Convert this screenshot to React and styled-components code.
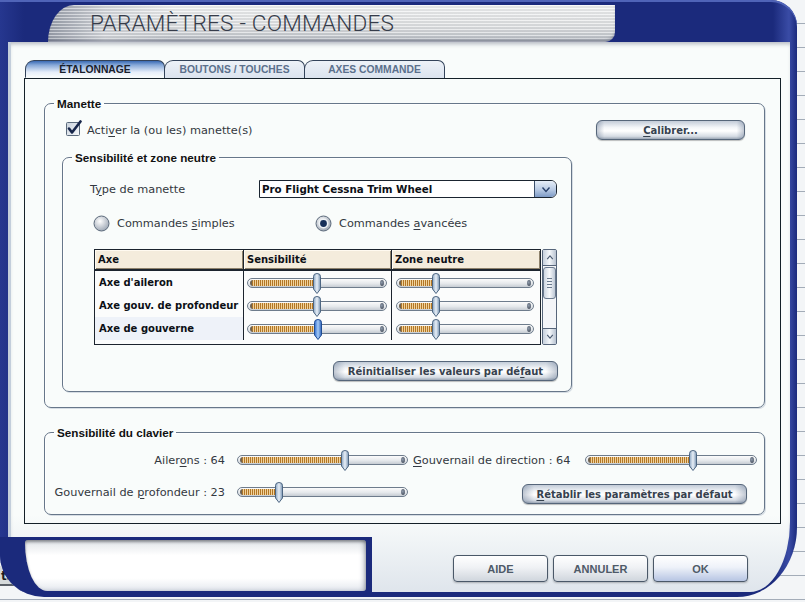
import styled, { createGlobalStyle } from "styled-components";

const NAVY = "#1b2a7c";
const UI_FONT = `"DejaVu Sans", Verdana, sans-serif`;
const BOLD_FONT = `"Liberation Sans", Arial, sans-serif`;

const axes = [
  { name: "Axe d'aileron", sens: 0.5, zone: 0.29 },
  { name: "Axe gouv. de profondeur", sens: 0.5, zone: 0.29 },
  { name: "Axe de gouverne", sens: 0.51, zone: 0.29, focus: true },
];

function CheckBox() {
  return (
    <svg width="17" height="17" viewBox="0 0 17 17">
      <defs>
        <linearGradient id="cbg" x1="0" y1="0" x2="1" y2="1">
          <stop offset="0" stopColor="#c9d2dc" />
          <stop offset="1" stopColor="#f6f8fa" />
        </linearGradient>
      </defs>
      <rect x="0.5" y="2.5" width="13" height="13" rx="1" fill="url(#cbg)" stroke="#5b6a7c" />
      <path d="M3 8.5 L6 12.5 L14.5 1.5" stroke="#17264a" strokeWidth="2.6" fill="none" strokeLinecap="round" strokeLinejoin="round" />
    </svg>
  );
}

function Radio({ on }) {
  return (
    <svg width="17" height="17" viewBox="0 0 17 17">
      <defs>
        <radialGradient id="rbg" cx="0.4" cy="0.35" r="0.7">
          <stop offset="0" stopColor="#ffffff" />
          <stop offset="1" stopColor="#9aa4b2" />
        </radialGradient>
      </defs>
      <circle cx="8.5" cy="8.5" r="7.5" fill="url(#rbg)" stroke="#5d6b7c" />
      {on && <circle cx="8.5" cy="8.5" r="5" fill="#eef2f6" />}
      {on && <circle cx="8.5" cy="8.5" r="3.4" fill="#17305a" />}
    </svg>
  );
}

function Chevron({ color = "#28406a", down = true }) {
  return (
    <svg width="10" height="7" viewBox="0 0 10 7">
      <path d={down ? "M1.5 1.5 L5 5.5 L8.5 1.5" : "M1.5 5.5 L5 1.5 L8.5 5.5"} stroke={color} strokeWidth="1.4" fill="none" />
    </svg>
  );
}

function ThumbShape({ focus }) {
  const id = focus ? "thf" : "thn";
  return (
    <svg width="10" height="21" viewBox="0 0 10 21">
      <defs>
        <linearGradient id={id} x1="0" y1="0" x2="1" y2="0">
          <stop offset="0" stopColor={focus ? "#2d6bd0" : "#8ba6c2"} />
          <stop offset="0.5" stopColor={focus ? "#a6cbf6" : "#e8eff7"} />
          <stop offset="1" stopColor={focus ? "#2a60b8" : "#7894b2"} />
        </linearGradient>
      </defs>
      <path d="M1.5 3.5 Q1.5 0.5 5 0.5 Q8.5 0.5 8.5 3.5 L8.5 16 L5 20.5 L1.5 16 Z" fill={`url(#${id})`} stroke={focus ? "#1f4c94" : "#4d6682"} />
    </svg>
  );
}

function Slider({ width, value, focus }) {
  const pos = Math.round(value * width);
  return (
    <SliderBox $w={width}>
      <Track>
        <Fill style={{ width: pos - 4 }} />
        <EndDot />
      </Track>
      <Thumb style={{ left: pos - 5 }}>
        <ThumbShape focus={focus} />
      </Thumb>
    </SliderBox>
  );
}

export default function App() {
  return (
    <>
      <GlobalStyle />
      <Page>
        <BehindWindow>ts</BehindWindow>
        <Window>
          <TitleBar>
            <TitleStrip>
              <Title>PARAMÈTRES - COMMANDES</Title>
            </TitleStrip>
          </TitleBar>

          <Main>
            <TabArea>
              <TabRow>
                <Tab $active>ÉTALONNAGE</Tab>
                <Tab>BOUTONS / TOUCHES</Tab>
                <Tab>AXES COMMANDE</Tab>
              </TabRow>

              <TabPanel>
                <Group>
                  <Legend>Manette</Legend>
                  <ManetteBody>
                    <TopRow>
                      <CheckLabel>
                        <CheckBox />
                        <span>
                          Acti<u>v</u>er la (ou les) manette(s)
                        </span>
                      </CheckLabel>
                      <Button $w={149}>
                        <u>C</u>alibrer...
                      </Button>
                    </TopRow>

                    <SubGroup>
                      <Legend>Sensibilité et zone neutre</Legend>
                      <SensBody>
                        <TypeRow>
                          <Label $w={169}>
                            T<u>y</u>pe de manette
                          </Label>
                          <Select>
                            <SelectText>Pro Flight Cessna Trim Wheel</SelectText>
                            <SelectArrow>
                              <Chevron />
                            </SelectArrow>
                          </Select>
                        </TypeRow>

                        <RadioRow>
                          <RadioOption $w={222}>
                            <Radio />
                            <span>
                              Commandes <u>s</u>imples
                            </span>
                          </RadioOption>
                          <RadioOption>
                            <Radio on />
                            <span>
                              Commandes <u>a</u>vancées
                            </span>
                          </RadioOption>
                        </RadioRow>

                        <TableWrap>
                          <AxisGrid>
                            <HeadCell>Axe</HeadCell>
                            <HeadCell>Sensibilité</HeadCell>
                            <HeadCell $last>Zone neutre</HeadCell>
                            {axes.map((a) => (
                              <Row key={a.name}>
                                <NameCell $focus={a.focus}>{a.name}</NameCell>
                                <SliderCell $pl={3}>
                                  <Slider width={140} value={a.sens} focus={a.focus} />
                                </SliderCell>
                                <SliderCell $pl={4} $last>
                                  <Slider width={138} value={a.zone} />
                                </SliderCell>
                              </Row>
                            ))}
                          </AxisGrid>
                          <ScrollBar>
                            <ScrollButton>
                              <Chevron down={false} color="#4a5a70" />
                            </ScrollButton>
                            <ScrollThumb>
                              <Grip />
                              <Grip />
                              <Grip />
                              <Grip />
                            </ScrollThumb>
                            <ScrollSpace />
                            <ScrollButton $bottom>
                              <Chevron color="#4a5a70" />
                            </ScrollButton>
                          </ScrollBar>
                        </TableWrap>

                        <ButtonLine>
                          <Button $w={225}>
                            Réinitialiser les valeurs par dé<u>f</u>aut
                          </Button>
                        </ButtonLine>
                      </SensBody>
                    </SubGroup>
                  </ManetteBody>
                </Group>

                <Group $mt={18}>
                  <Legend>Sensibilité du clavier</Legend>
                  <KeyBody>
                    <KeyRow>
                      <Label $w={171} $right>
                        Ailer<u>o</u>ns : 64
                      </Label>
                      <SliderSlot $ml={12}>
                        <Slider width={171} value={0.63} />
                      </SliderSlot>
                      <Label $ml={5}>
                        <u>G</u>ouvernail de direction : 64
                      </Label>
                      <SliderSlot $ml="auto">
                        <Slider width={172} value={0.63} />
                      </SliderSlot>
                    </KeyRow>
                    <KeyRow $second>
                      <Label $w={171} $right>
                        Gouvernail de <u>p</u>rofondeur : 23
                      </Label>
                      <SliderSlot $ml={12}>
                        <Slider width={171} value={0.245} />
                      </SliderSlot>
                      <Button $w={225} $end>
                        <u>R</u>établir les paramètres par défaut
                      </Button>
                    </KeyRow>
                  </KeyBody>
                </Group>
              </TabPanel>
            </TabArea>

            <Footer>
              <Dock>
                <DockPanel />
              </Dock>
              <FooterButtons>
                <FooterButton>AIDE</FooterButton>
                <FooterButton>ANNULER</FooterButton>
                <FooterButton $primary>OK</FooterButton>
              </FooterButtons>
            </Footer>
          </Main>
        </Window>
      </Page>
    </>
  );
}

const GlobalStyle = createGlobalStyle`
  html, body {
    margin: 0;
    padding: 0;
  }
  body {
    width: 805px;
    height: 602px;
    overflow: hidden;
    background: repeating-linear-gradient(180deg, #f3f5f7 0 23px, #a3acb8 23px 24px);
    font-family: ${UI_FONT};
  }
  u {
    text-decoration: underline;
    text-underline-offset: 2px;
  }
`;

const Page = styled.div`
  position: relative;
  width: 805px;
  height: 602px;
`;

const BehindWindow = styled.div`
  position: absolute;
  left: 0;
  top: 566px;
  width: 110px;
  height: 20px;
  padding-left: 1px;
  box-sizing: border-box;
  background: #d6dadb;
  border-bottom: 2px solid #5a6068;
  font: bold 12px ${UI_FONT};
  line-height: 20px;
  color: #1a1d22;
`;

const Window = styled.div`
  position: relative;
  z-index: 1;
  width: 797px;
  height: 597px;
  display: flex;
  flex-direction: column;
  overflow: hidden;
  background: linear-gradient(90deg, #26378f 0, ${NAVY} 3%, ${NAVY} 97%, #3a4ca6 99%, ${NAVY} 100%);
  border-radius: 0 26px 60px 44px / 0 26px 70px 42px;
  box-shadow: inset 0 2px 0 #5064b8;
`;

const TitleBar = styled.div`
  flex: none;
  height: 42px;
  display: flex;
  align-items: flex-end;
`;

const TitleStrip = styled.div`
  margin-left: 48px;
  width: 567px;
  height: 37px;
  box-sizing: border-box;
  padding-left: 42px;
  display: flex;
  align-items: center;
  border-radius: 26px 0 10px 0 / 37px 0 10px 0;
  background:
    repeating-linear-gradient(180deg, rgba(255, 255, 255, 0.45) 0 1px, rgba(0, 0, 0, 0.06) 1px 3px),
    linear-gradient(90deg, #9aa0ac 0, #d4d7dc 10%, rgba(255, 255, 255, 0) 22%),
    linear-gradient(180deg, #f2f3f4 0%, #dfe1e3 60%, #b9bec6 100%);
  box-shadow: inset 0 -3px 3px -1px rgba(20, 30, 60, 0.35);
`;

const Title = styled.h1`
  margin: 0;
  font: 300 22.6px Roboto, "Liberation Sans", sans-serif;
  letter-spacing: 0.2px;
  color: #363c4a;
`;

const Main = styled.div`
  flex: 1;
  display: flex;
  flex-direction: column;
  margin: 0 7px 5px 8px;
  border-left: 3px solid #c3cedb;
  border-bottom-right-radius: 40px 70px;
  background: linear-gradient(180deg, #f9fcfb 0, #f9fcfb 86%, #dfe5ec 100%);
  box-shadow: inset 0 4px 4px -2px rgba(20, 30, 60, 0.3);
`;

const TabArea = styled.div`
  padding: 18px 9px 0 13px;
  display: flex;
  flex-direction: column;
`;

const TabRow = styled.div`
  display: flex;
  height: 18px;
  margin-left: 1px;
  position: relative;
  z-index: 1;
`;

const Tab = styled.div`
  width: 140px;
  box-sizing: border-box;
  display: flex;
  align-items: center;
  justify-content: center;
  border: 1px solid #33435a;
  border-bottom: ${(p) => (p.$active ? "1px solid #f6fafb" : "none")};
  border-radius: 9px 7px 0 0;
  font: bold 10.3px ${BOLD_FONT};
  color: ${(p) => (p.$active ? "#18202c" : "#5b708c")};
  background: ${(p) =>
    p.$active
      ? "linear-gradient(180deg, #3a6ab4 0, #86a8d8 25%, #e6eef9 70%, #f8fbfb 100%)"
      : "linear-gradient(180deg, #edf2f8 0, #dbe3ee 100%)"};
  & + & {
    margin-left: -1px;
    width: 141px;
  }
`;

const TabPanel = styled.div`
  height: 446px;
  box-sizing: border-box;
  border: 1px solid #142028;
  padding: 18px 15px 6px 19px;
  display: flex;
  flex-direction: column;
`;

const Group = styled.fieldset`
  margin: ${(p) => p.$mt || 0}px 0 0 0;
  padding: 0;
  min-width: 0;
  border: 1px solid #67778a;
  border-radius: 7px;
  box-shadow: 1px 1px 0 #d6dde4, inset 1px 1px 0 #ffffff;
`;

const SubGroup = styled(Group)`
  width: 510px;
  box-sizing: border-box;
  margin: 11px 0 0 17px;
`;

const Legend = styled.legend`
  margin-left: 9px;
  padding: 0 3px;
  font: bold 11.7px ${BOLD_FONT};
  line-height: 13px;
  color: #111;
`;

const ManetteBody = styled.div`
  padding: 10px 19px 15px 0;
`;

const TopRow = styled.div`
  display: flex;
  align-items: center;
  justify-content: space-between;
  height: 20px;
  margin-left: 21px;
`;

const CheckLabel = styled.label`
  display: flex;
  align-items: center;
  gap: 4px;
  font: 11.3px ${UI_FONT};
  color: #333840;
  svg {
    margin-top: -3px;
  }
`;

const Button = styled.button`
  flex: none;
  width: ${(p) => p.$w}px;
  height: 20px;
  box-sizing: border-box;
  padding: 0;
  align-self: ${(p) => (p.$end ? "flex-end" : "auto")};
  margin-left: ${(p) => (p.$end ? "auto" : "0")};
  margin-right: ${(p) => (p.$end ? "10px" : "0")};
  border: 1px solid #56667a;
  border-radius: 6px;
  background:
    linear-gradient(90deg, rgba(80, 100, 130, 0.35) 0, rgba(80, 100, 130, 0) 5%, rgba(80, 100, 130, 0) 95%, rgba(80, 100, 130, 0.35) 100%),
    linear-gradient(180deg, #c3ccd8 0%, #f2f5f8 35%, #ffffff 55%, #d6dce4 85%, #9ba6b5 100%);
  box-shadow: 0 1px 1px rgba(0, 0, 0, 0.25);
  font: bold 10px ${UI_FONT};
  color: #36414e;
  cursor: pointer;
`;

const SensBody = styled.div`
  padding: 16px 14px 10px 27px;
  display: flex;
  flex-direction: column;
`;

const TypeRow = styled.div`
  display: flex;
  align-items: center;
  height: 18px;
`;

const Label = styled.span`
  flex: none;
  width: ${(p) => (p.$w ? `${p.$w}px` : "auto")};
  margin-left: ${(p) => p.$ml || 0}px;
  text-align: ${(p) => (p.$right ? "right" : "left")};
  font: 11.3px ${UI_FONT};
  color: #333840;
  white-space: nowrap;
`;

const Select = styled.div`
  width: 298px;
  height: 18px;
  box-sizing: border-box;
  display: flex;
  border: 1px solid #1a2430;
  border-radius: 0 6px 6px 0;
  background: #ffffff;
  overflow: hidden;
`;

const SelectText = styled.span`
  flex: 1;
  padding-left: 2px;
  font: bold 10.3px ${UI_FONT};
  line-height: 16px;
  color: #0c1016;
`;

const SelectArrow = styled.span`
  width: 21px;
  display: flex;
  align-items: center;
  justify-content: center;
  border-left: 1px solid #3a4e6a;
  background: linear-gradient(180deg, #e6eef8 0, #b7c9e3 55%, #7d9ac6 100%);
`;

const RadioRow = styled.div`
  display: flex;
  align-items: center;
  height: 18px;
  margin: 16px 0 0 3px;
`;

const RadioOption = styled.label`
  flex: none;
  width: ${(p) => (p.$w ? `${p.$w}px` : "auto")};
  display: flex;
  align-items: center;
  gap: 7px;
  font: 11.3px ${UI_FONT};
  color: #333840;
`;

const TableWrap = styled.div`
  display: flex;
  gap: 1px;
  width: 463px;
  height: 96px;
  margin: 17px 0 0 4px;
`;

const AxisGrid = styled.div`
  flex: 1;
  display: grid;
  grid-template-columns: 149px 148px 1fr;
  grid-template-rows: 21px repeat(3, 23px);
  align-content: start;
  border: 1px solid #1c242e;
  background: #fbfcfc;
`;

const HeadCell = styled.div`
  display: flex;
  align-items: center;
  padding-left: 3px;
  border-right: ${(p) => (p.$last ? "none" : "1px solid #1c242e")};
  border-bottom: 2px solid #1c242e;
  background: #f4ecdc;
  box-shadow: inset 1px 1px 0 #fffaf0, inset -1px -1px 0 #8e826c;
  font: bold 10px ${UI_FONT};
  color: #0c1016;
`;

const Row = styled.div`
  display: contents;
`;

const NameCell = styled.div`
  display: flex;
  align-items: center;
  padding-left: 4px;
  border-right: 1px solid #1c242e;
  background: ${(p) => (p.$focus ? "#eef2f9" : "transparent")};
  font: bold 10px ${UI_FONT};
  color: #0c1016;
  white-space: nowrap;
  overflow: hidden;
`;

const SliderCell = styled.div`
  display: flex;
  align-items: center;
  padding-left: ${(p) => p.$pl}px;
  border-right: ${(p) => (p.$last ? "none" : "1px solid #1c242e")};
`;

const SliderBox = styled.div`
  position: relative;
  flex: none;
  width: ${(p) => p.$w}px;
  height: 22px;
  display: flex;
  align-items: center;
`;

const SliderSlot = styled.div`
  display: flex;
  margin-left: ${(p) => (p.$ml === "auto" ? "auto" : `${p.$ml}px`)};
`;

const Track = styled.div`
  position: relative;
  flex: 1;
  height: 10px;
  box-sizing: border-box;
  padding-left: 2px;
  display: flex;
  align-items: center;
  border: 1px solid #6e7c8c;
  border-radius: 5px;
  background: linear-gradient(180deg, #fbfbfb 0, #e6e9ec 55%, #c6ccd3 100%);
`;

const Fill = styled.div`
  flex: none;
  height: 6px;
  box-sizing: border-box;
  border-left: 2px solid #6f6250;
  border-radius: 3px 0 0 3px;
  background: repeating-linear-gradient(90deg, #b27626 0 1px, #f1d29a 1px 2px);
`;

const EndDot = styled.span`
  position: absolute;
  right: 2px;
  top: 1px;
  width: 4px;
  height: 6px;
  border-radius: 50%;
  background: radial-gradient(circle at 40% 40%, #8c98a8, #3e4654);
`;

const Thumb = styled.span`
  position: absolute;
  top: 1px;
  width: 10px;
  height: 21px;
  display: flex;
`;

const ScrollBar = styled.div`
  width: 13px;
  display: flex;
  flex-direction: column;
  border: 1px solid #56657a;
  border-radius: 2px;
  background: #f3f5f8;
`;

const ScrollButton = styled.div`
  height: 15px;
  display: flex;
  align-items: center;
  justify-content: center;
  background: linear-gradient(90deg, #c6d0dc, #f4f7fa 50%, #b8c3d1);
  border-bottom: ${(p) => (p.$bottom ? "none" : "1px solid #56657a")};
  border-top: ${(p) => (p.$bottom ? "1px solid #56657a" : "none")};
  svg {
    width: 8px;
  }
`;

const ScrollThumb = styled.div`
  height: 30px;
  margin: 1px 0;
  display: flex;
  flex-direction: column;
  align-items: center;
  justify-content: center;
  gap: 2px;
  border: 1px solid #6a7a8e;
  border-radius: 3px;
  background: linear-gradient(90deg, #cdd6e1, #f7f9fb 50%, #bcc7d5);
`;

const Grip = styled.span`
  width: 5px;
  height: 1px;
  background: #6a7a8e;
`;

const ScrollSpace = styled.div`
  flex: 1;
`;

const ButtonLine = styled.div`
  display: flex;
  justify-content: flex-end;
  margin: 16px -1px 0 0;
`;

const KeyBody = styled.div`
  padding: 11px 7px 10px 9px;
  display: flex;
  flex-direction: column;
`;

const KeyRow = styled.div`
  display: flex;
  align-items: center;
  height: ${(p) => (p.$second ? 24 : 20)}px;
  margin-top: ${(p) => (p.$second ? 10 : 0)}px;
`;

const Footer = styled.div`
  flex: 1;
  display: flex;
  align-items: flex-start;
`;

const Dock = styled.div`
  flex: none;
  width: 372px;
  height: 55px;
  box-sizing: border-box;
  margin: 13px 0 0 -11px;
  padding: 3px 6px 1px 25px;
  display: flex;
  background: ${NAVY};
`;

const DockPanel = styled.div`
  flex: 1;
  border-radius: 3px 3px 3px 22px / 3px 3px 3px 48px;
  background: linear-gradient(180deg, #dfe3e8 0, #ffffff 30%, #ffffff 75%, #e4e8ee 100%);
  box-shadow: inset 0 2px 3px rgba(0, 0, 0, 0.35), inset -3px 0 4px rgba(40, 50, 80, 0.25);
`;

const FooterButtons = styled.div`
  display: flex;
  gap: 5px;
  margin: 31px 42px 0 auto;
`;

const FooterButton = styled.button`
  width: 95px;
  height: 27px;
  padding: 0;
  border: 1px solid #4a5868;
  border-radius: 4px;
  background: ${(p) =>
    p.$primary
      ? "linear-gradient(180deg, #ffffff 0, #eef2f9 45%, #b7c5e3 100%)"
      : "linear-gradient(180deg, #ffffff 0, #f0f2f5 45%, #d0d6dd 100%)"};
  box-shadow: 0 1px 2px rgba(0, 0, 0, 0.25);
  font: bold 11px ${BOLD_FONT};
  color: #4e5a68;
  cursor: pointer;
`;
